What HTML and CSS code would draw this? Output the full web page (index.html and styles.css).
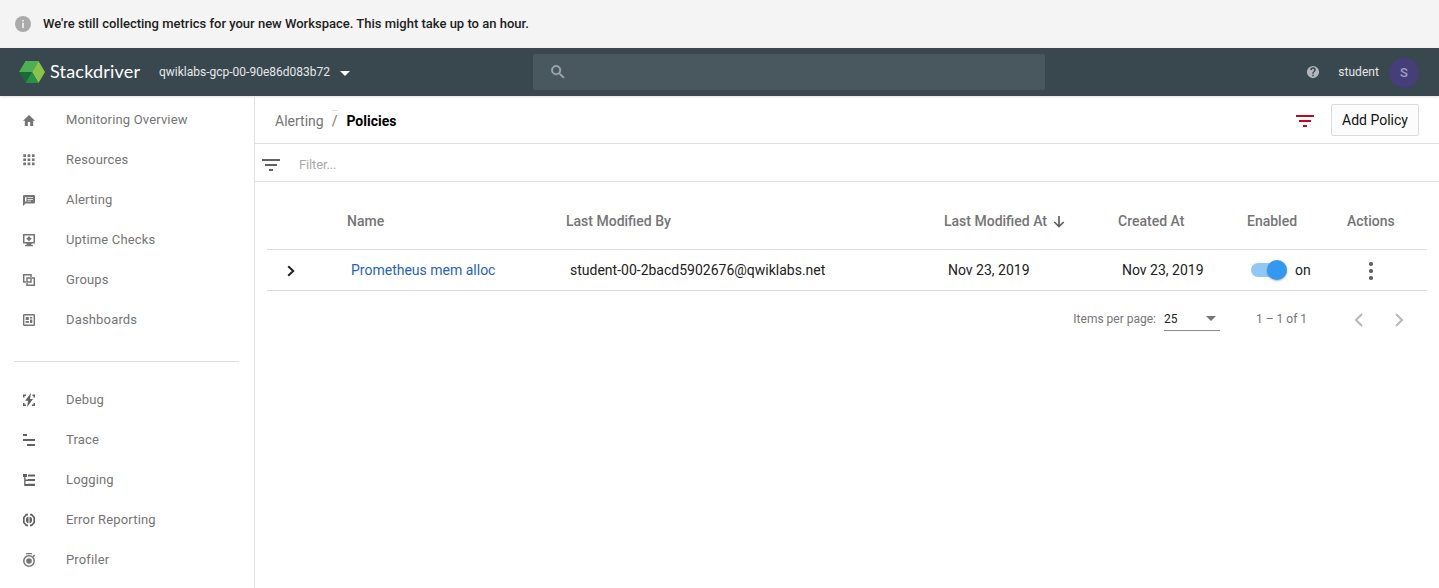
FILE: index.html
```html
<!DOCTYPE html>
<html lang="en">
<head>
<meta charset="utf-8">
<title>Stackdriver - Alerting Policies</title>
<link rel="stylesheet" href="styles.css">
</head>
<body>
<div class="banner">
  <svg class="banner-icon" width="16" height="16" viewBox="0 0 16 16"><circle cx="8" cy="8" r="8" fill="#aaa"/><path d="M7.2 4h1.6v1.5H7.2zM7.2 6.8h1.6V12H7.2z" fill="#f4f4f4"/></svg>
  <span class="banner-text">We're still collecting metrics for your new Workspace. This might take up to an hour.</span>
</div>
<header class="topbar">
  <svg class="logo" width="26" height="22" viewBox="0 0 26 22"><path d="M6.5 0h13L13 11H0z" fill="#4caf50"/><path d="M19.500 0L26 11l-6.500 11L13 11z" fill="#8bc34a"/><path d="M0 11h13L6.500 22z" fill="#186a36"/><path d="M13 11l6.500 11h-13z" fill="#259347"/></svg>
  <span class="brand">Stackdriver</span>
  <span class="project">qwiklabs-gcp-00-90e86d083b72</span>
  <svg class="caret" width="10" height="5" viewBox="0 0 10 5"><path d="M0 0h10L5 5z" fill="#fff"/></svg>
  <div class="search">
    <svg width="18" height="18" viewBox="0 0 24 24"><path fill="#a4abaf" stroke="#a4abaf" stroke-width=".4" d="M15.500 14h-.79l-.28-.27A6.470 6.470 0 0 0 16 9.500 6.500 6.500 0 1 0 9.500 16c1.610 0 3.090-.59 4.230-1.570l.27.28v.79l5 4.990L20.490 19l-4.990-5zm-6 0C7.010 14 5 11.990 5 9.500S7.010 5 9.500 5 14 7.010 14 9.500 11.990 14 9.500 14z"/></svg>
  </div>
  <div class="account">
    <svg class="help" width="14" height="14" viewBox="0 0 24 24"><path fill="#b0b6b9" d="M12 1.500a10.500 10.500 0 1 0 0 21 10.500 10.500 0 0 0 0-21zm1.200 17.800h-2.500v-2.400h2.500zm2.400-8.400-1.100 1.100c-.9.900-1.300 1.500-1.300 3.200h-2.500v-.6c0-1.300.5-2.400 1.400-3.200l1.400-1.400c.4-.4.600-.9.600-1.500a2.100 2.100 0 0 0-4.200 0H7.300a4.700 4.700 0 0 1 9.400 0c0 .9-.5 1.800-1.100 2.400z"/></svg>
    <span class="user">student</span>
    <span class="avatar">S</span>
  </div>
</header>
<div class="shell">
  <nav class="sidebar">
    <a class="item"><svg width="14" height="14" viewBox="0 0 14 14"><path d="M5.800 13V9h2.400v4h3V7.700H13L7 2 1 7.700h1.800V13z"/></svg><span>Monitoring Overview</span></a>
    <a class="item"><svg width="14" height="14" viewBox="0 0 14 14"><path d="M1.300 1.300H4V4H1.300zm4.300 0h2.700V4H5.600zm4.300 0h2.700V4H9.900zM1.300 5.500H4v2.600H1.300zm4.300 0h2.700v2.600H5.600zm4.300 0h2.700v2.600H9.900zM1.300 9.600H4v2.600H1.300zm4.300 0h2.700v2.600H5.600zm4.300 0h2.700v2.600H9.900z"/></svg><span>Resources</span></a>
    <a class="item"><svg width="14" height="14" viewBox="0 0 14 14"><path fill-rule="evenodd" d="M2.200 2h9.600Q13 2 13 3.200v6.100q0 1.200-1.200 1.200H3.500L1 13V3.200Q1 2 2.200 2zM3 4v4.600h1.500V4zm2.500 0v.8H11V4zm0 2v.8H11V6zm0 1.800v.8H9v-.8z"/></svg><span>Alerting</span></a>
    <a class="item"><svg width="14" height="14" viewBox="0 0 14 14"><path fill-rule="evenodd" d="M1 1h12v9.500H9.500V12H11v1.300H3V12h1.500v-1.500H1zm1.500 1.400v6.600h9V2.400z"/><path d="M7 3l1.200 1.500 1.700 1.200-1.700 1.200L7 8.400 5.800 6.900 4.100 5.700l1.700-1.200z"/></svg><span>Uptime Checks</span></a>
    <a class="item"><svg width="14" height="14" viewBox="0 0 14 14"><path fill="none" stroke="#757575" stroke-width="1.500" d="M4 9H1.700V1.700H9V4M10 5h2.300v7.300H5V10M5 5h4v4H5z"/></svg><span>Groups</span></a>
    <a class="item"><svg width="14" height="14" viewBox="0 0 14 14"><path fill-rule="evenodd" d="M2.200 1h9.600Q13 1 13 2.200v9.600q0 1.200-1.200 1.200H2.200Q1 13 1 11.800V2.200Q1 1 2.200 1zm.2 1.400v9.200h9.200V2.400zM3.700 4h3.100v3H3.700zm0 4h3.100v2H3.700zM8 4h2.300v1.500H8zm0 2.500h2.300V10H8z"/></svg><span>Dashboards</span></a>
    <hr class="rule">
    <a class="item tools"><svg width="14" height="14" viewBox="0 0 14 14"><path d="M9 0 3 7.800h3L5.200 14 11 6H8zM1 1.500h3V3H2.500v1.500H1zm9.500 0H13v3h-1.500V3h-1zM1 10h1.500v1.500H4V13H1zm10.500 0H13v3h-3v-1.500h1.500z"/></svg><span>Debug</span></a>
    <a class="item tools"><svg width="14" height="14" viewBox="0 0 14 14"><path d="M1 1h4v2H1zm0 5h12v2H1zm4 5h8v2H5z"/></svg><span>Trace</span></a>
    <a class="item tools"><svg width="14" height="14" viewBox="0 0 14 14"><path d="M1 1h4v3H3.500v2.500H6V6h7v2H3.500v3H6v-.3h7V13H2.200V4H1zm5 .5h7v2H6z"/></svg><span>Logging</span></a>
    <a class="item tools"><svg width="14" height="14" viewBox="0 0 14 14"><path fill="none" stroke="#616161" stroke-width="1.700" d="M6 1.700H4.400L1.800 4.500v5l2.600 2.800H6M8 1.700h1.600l2.600 2.800v5l-2.600 2.800H8"/><path d="M6.500 3.800v6.400C5 10.200 3.900 9 3.900 7S5 3.800 6.500 3.800zm1 0c1.500 0 2.600 1.200 2.600 3.200s-1.100 3.200-2.600 3.200z"/></svg><span>Error Reporting</span></a>
    <a class="item"><svg width="14" height="14" viewBox="0 0 14 14"><circle cx="7" cy="8" r="5.200" fill="none" stroke="#757575" stroke-width="1.500"/><circle cx="7" cy="8" r="2.800"/><path d="M4 0h6v1.300H4zM10.500 3l1.700-1.500 1 1L11.700 4.200z"/></svg><span>Profiler</span></a>
  </nav>
  <main class="content">
    <div class="heading">
      <span class="crumb">Alerting</span><span class="slash">/</span><span class="current">Policies</span>
      <svg class="filter-red" width="18" height="12" viewBox="0 0 18 12"><path fill="#d0021b" d="M0 0h18v2H0zm3 5h12v2H3zm4 5h4v2H7z"/></svg>
      <button class="add">Add Policy</button>
    </div>
    <div class="filter">
      <svg width="18" height="12" viewBox="0 0 18 12"><path fill="#616161" d="M0 0h18v2H0zm3 5h12v2H3zm4 5h4v2H7z"/></svg>
      <span>Filter...</span>
    </div>
    <section class="table">
      <div class="row head">
        <span></span><span>Name</span><span>Last Modified By</span>
        <span class="sorted">Last Modified At<svg width="12" height="12" viewBox="0 0 12 12"><path fill="none" stroke="#616161" stroke-width="1.700" d="M6 0v10.300M1.300 6 6 10.600 10.700 6"/></svg></span>
        <span>Created At</span><span>Enabled</span><span>Actions</span>
      </div>
      <div class="row body">
        <span class="expand"><svg width="8" height="12" viewBox="0 0 8 12"><path fill="none" stroke="#212121" stroke-width="2" d="M1.200 1.200 6.200 6l-5 4.800"/></svg></span>
        <span class="link">Prometheus mem alloc</span><span class="email">student-00-2bacd5902676@qwiklabs.net</span><span>Nov 23, 2019</span><span>Nov 23, 2019</span>
        <span class="enabled"><i class="switch"><i class="knob"></i></i>on</span>
        <span class="more"><svg width="4" height="20" viewBox="0 0 4 20"><g fill="#616161"><circle cx="2" cy="3" r="2.100"/><circle cx="2" cy="10" r="2.100"/><circle cx="2" cy="17" r="2.100"/></g></svg></span>
      </div>
    </section>
    <div class="pager">
      <span>Items per page:</span>
      <span class="select">25<svg width="10" height="5" viewBox="0 0 10 5"><path d="M0 0h10L5 5z" fill="#757575"/></svg></span>
      <span class="range">1 – 1 of 1</span>
      <svg class="prev" width="10" height="14" viewBox="0 0 10 14"><path fill="none" stroke="#b8b8b8" stroke-width="2" d="M8 1 2 7l6 6"/></svg>
      <svg class="next" width="10" height="14" viewBox="0 0 10 14"><path fill="none" stroke="#b8b8b8" stroke-width="2" d="m2 1 6 6-6 6"/></svg>
    </div>
  </main>
</div>
</body>
</html>
```

FILE: styles.css
```css
* { box-sizing: border-box; }
body { margin: 0; height: 588px; overflow: hidden; background: #fff; font-family: Roboto, sans-serif; color: #212121; }
svg { display: block; flex: none; }
span { white-space: nowrap; }

.banner { height: 48px; display: flex; align-items: center; padding-left: 15px; background: #f4f4f4; }
.banner-text { margin: 0 0 2px 12px; font-size: 13px; font-weight: 500; }

.topbar { height: 48px; display: flex; align-items: center; background: #39474f; color: #e6e8e9; padding: 0 20px 0 19px; box-shadow: 0 1px 2px rgba(0,0,0,.12); }
.brand { width: 114px; padding: 0 0 2px 5px; font: 400 18px Lato, sans-serif; letter-spacing: .2px; color: #fff; }
.project { width: 172px; font-size: 12px; }
.caret { margin: 2px 0 0 9px; }
.search { width: 512px; height: 36px; margin-left: 183px; padding-left: 16px; display: flex; align-items: center; background: #49585f; border-radius: 2px; }
.account { margin-left: auto; display: flex; align-items: center; }
.user { margin-left: 18px; font-size: 12px; letter-spacing: .05px; }
.avatar { width: 30px; height: 30px; margin: 2px 0 0 10px; border-radius: 50%; background: #453e78; color: #a3a0bd; font-size: 13px; font-weight: 500; line-height: 30px; text-align: center; }

.shell { height: 492px; display: flex; }
.sidebar { width: 255px; flex: none; padding-top: 4px; border-right: 1px solid #e0e0e0; }
.item { height: 40px; display: flex; align-items: center; padding-left: 22px; color: #757575; fill: #757575; font-size: 13px; letter-spacing: .16px; }
.item span { margin: 0 0 2px 30px; }
.tools { fill: #616161; }
.rule { margin: 21px 15px 18px 14px; border: 0; border-top: 1px solid #dcdcdc; }

.content { flex: 1; min-width: 0; }
.heading { height: 48px; display: flex; align-items: center; padding: 2px 20px 0 20px; border-bottom: 1px solid #e0e0e0; font-size: 14px; }
.crumb { color: #757575; }
.slash { position: relative; margin: 0 9px 0 8px; color: #757575; }
.slash::before { content: ""; position: absolute; left: 0; top: -3px; width: 6px; height: 1px; background: #e0e0e0; }
.current { font-weight: 700; color: #000; }
.filter-red { margin-left: auto; }
.add { width: 88px; height: 32px; margin: 0 0 2px 17px; padding: 0; border: 1px solid #dcdcdc; border-radius: 2px; background: #fcfcfc; font: 14px Roboto, sans-serif; color: #111; }
.filter { height: 38px; display: flex; align-items: center; padding: 4px 0 0 7px; border-bottom: 1px solid #e0e0e0; font-size: 13px; color: #aaa; }
.filter span { margin-left: 19px; letter-spacing: -.15px; }

.table { margin: 12px 12px 0; }
.row { display: grid; grid-template-columns: 80px 219px 378px 174px 129px 100px 80px; align-items: center; border-bottom: 1px solid #dcdcdc; font-size: 14px; }
.head { height: 56px; padding-bottom: 1px; font-weight: 500; color: #757575; }
.sorted { display: flex; align-items: center; gap: 6px; }
.sorted svg { margin-top: 1px; }
.body { height: 41px; }
.body > span { padding-left: 4px; }
.body > .expand { padding: 2px 0 0 20px; }
.link { color: #1f5fc9; }
.enabled { display: flex; align-items: center; }
.switch { width: 36px; height: 14px; margin-right: 8px; border-radius: 7px; background: #90c8f5; display: flex; align-items: center; justify-content: flex-end; }
.knob { width: 20px; height: 20px; border-radius: 50%; background: #3399f0; box-shadow: 0 1px 2px rgba(0,0,0,.3); flex: none; }
.body > .more { padding: 2px 0 0 22px; }

.pager { height: 56px; display: flex; align-items: center; justify-content: flex-end; padding-right: 35px; font-size: 12px; color: #757575; }
.select { width: 56px; height: 23px; margin-left: 8px; padding-right: 4px; display: flex; align-items: center; justify-content: space-between; border-bottom: 1px solid #8c8c8c; color: #212121; }
.range { width: 62px; margin-left: 36px; }
.prev { margin: 2px 0 0 36px; }
.next { margin: 2px 0 0 30px; }
```
